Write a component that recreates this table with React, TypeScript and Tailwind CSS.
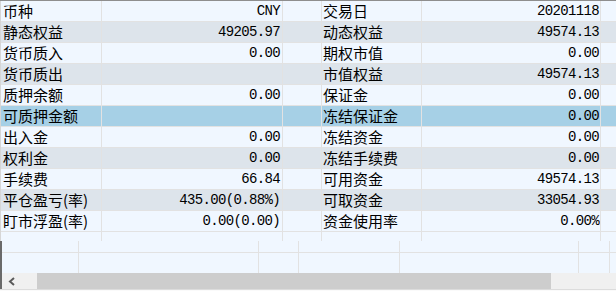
import React from "react";

const rows: [string, string, string, string][] = [
  ["币种", "CNY", "交易日", "20201118"],
  ["静态权益", "49205.97", "动态权益", "49574.13"],
  ["货币质入", "0.00", "期权市值", "0.00"],
  ["货币质出", "", "市值权益", "49574.13"],
  ["质押余额", "0.00", "保证金", "0.00"],
  ["可质押金额", "", "冻结保证金", "0.00"],
  ["出入金", "0.00", "冻结资金", "0.00"],
  ["权利金", "0.00", "冻结手续费", "0.00"],
  ["手续费", "66.84", "可用资金", "49574.13"],
  ["平仓盈亏(率)", "435.00(0.88%)", "可取资金", "33054.93"],
  ["盯市浮盈(率)", "0.00(0.00)", "资金使用率", "0.00%"],
];

function rowBg(i: number) {
  if (i === 5) return "bg-[#a6d0e6]";
  if (i % 2 === 1) return "bg-[#dde4eb]";
  return "bg-[#f0f7ff]";
}

const cell = "border-r border-[#e2e2e2] h-full";
const label =
  "font-['Noto_Sans_CJK_SC',sans-serif] text-[15px] leading-[20px] text-black whitespace-nowrap overflow-hidden";
const num =
  "font-['Liberation_Mono',monospace] text-[14px] tracking-[-0.65px] leading-[20px] text-black text-right whitespace-nowrap overflow-hidden";

export default function App() {
  return (
    <div className="w-[616px] h-[291px] overflow-hidden bg-[#f0f7ff] flex flex-col border-t border-[#8e8e8e]">
      <div className="border-l border-[#d6d6d6] flex flex-col">
        {rows.map((r, i) => (
          <div
            key={i}
            className={`grid grid-cols-[101px_181px_39px_100px_179px_1fr] h-[21px] border-b border-[#e2e2e2] ${rowBg(i)}`}
          >
            <div className={`${cell} ${label} pl-[2px]`}>{r[0]}</div>
            <div className={`${cell} ${num} pr-[2px]`}>{r[1]}</div>
            <div className={cell}></div>
            <div className={`${cell} ${label} pl-[1px]`}>{r[2]}</div>
            <div className={`${cell} ${num} pr-[1px]`}>{r[3]}</div>
            <div></div>
          </div>
        ))}
        <div className="grid grid-cols-[101px_181px_39px_100px_179px_1fr] h-[9px] bg-[#f0f7ff]">
          <div className={cell}></div>
          <div className={cell}></div>
          <div className={cell}></div>
          <div className={cell}></div>
          <div className={cell}></div>
          <div></div>
        </div>
      </div>
      <div className="border-l-2 border-[#6a6a6a] flex flex-col">
        <div className="grid grid-cols-[77px_180px_40px_101px_179px_31px_1fr] h-[12px] border-b border-[#e2e2e2] bg-[#f0f7ff]">
          <div className={cell}></div>
          <div className={cell}></div>
          <div className={cell}></div>
          <div className={cell}></div>
          <div className={cell}></div>
          <div className={cell}></div>
          <div></div>
        </div>
        <div className="grid grid-cols-[77px_180px_40px_101px_179px_31px_1fr] h-[20px] bg-[#f0f7ff]">
          <div className={cell}></div>
          <div className={cell}></div>
          <div className={cell}></div>
          <div className={cell}></div>
          <div className={cell}></div>
          <div className={cell}></div>
          <div></div>
        </div>
        <div className="flex h-[16px] bg-[#f0f0f0]">
          <div className="w-[35px] h-full flex items-center justify-start pl-[6px]">
            <svg width="8" height="9" viewBox="0 0 8 9">
              <polyline
                points="6,1 2,4.5 6,8"
                fill="none"
                stroke="#5a5a5a"
                strokeWidth="2"
              />
            </svg>
          </div>
          <div className="w-[514px] h-full bg-[#cdcdcd]"></div>
          <div className="flex-1 h-full"></div>
        </div>
      </div>
      <div className="h-[1px] bg-[#dcdcdc]"></div>
      <div className="flex-1 bg-[#fafafa]"></div>
    </div>
  );
}
